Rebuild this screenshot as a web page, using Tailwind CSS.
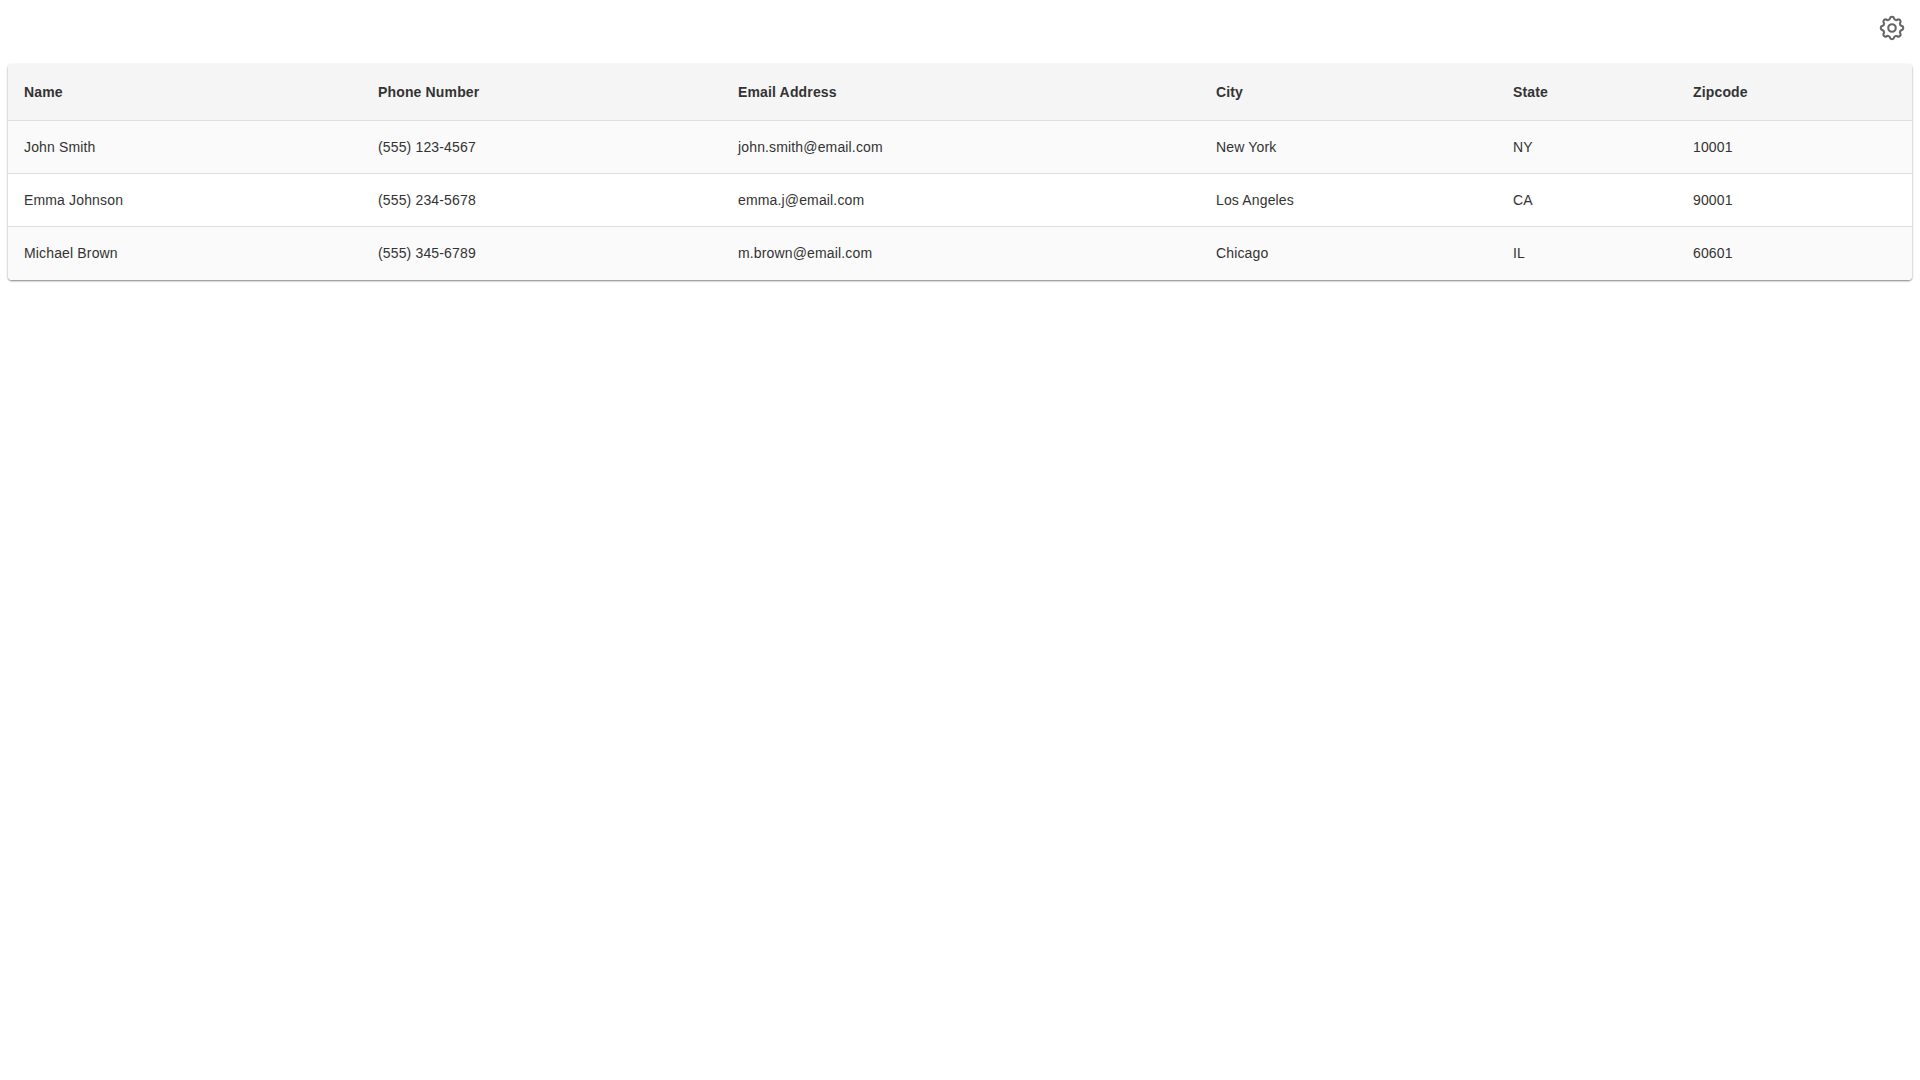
<!DOCTYPE html>
<html lang="en">
<head>
  <meta charset="UTF-8" />
  <title>Contacts</title>
  <script src="https://cdn.jsdelivr.net/npm/@tailwindcss/browser@4"></script>
</head>
<body class="bg-white text-[#333333] font-['Liberation_Sans',Arial,sans-serif] min-h-screen">
  <div class="flex justify-end h-[64px] pt-[13px] pr-[13px]">
    <button class="w-[30px] h-[30px] text-[#666666]">
      <svg xmlns="http://www.w3.org/2000/svg" width="30" height="30" viewBox="0 0 24 24" fill="none" stroke="currentColor" stroke-width="1.7" stroke-linecap="round" stroke-linejoin="round"><path d="M10.325 4.317c.426-1.756 2.924-1.756 3.35 0a1.724 1.724 0 002.573 1.066c1.543-.94 3.31.826 2.37 2.37a1.724 1.724 0 001.065 2.572c1.756.426 1.756 2.924 0 3.35a1.724 1.724 0 00-1.066 2.573c.94 1.543-.826 3.31-2.37 2.37a1.724 1.724 0 00-2.572 1.065c-.426 1.756-2.924 1.756-3.35 0a1.724 1.724 0 00-2.573-1.066c-1.543.94-3.31-.826-2.37-2.37a1.724 1.724 0 00-1.065-2.572c-1.756-.426-1.756-2.924 0-3.35a1.724 1.724 0 001.066-2.573c-.94-1.543.826-3.31 2.37-2.37.996.608 2.296.07 2.572-1.065z"/><path d="M15 12a3 3 0 11-6 0 3 3 0 016 0z"/></svg>
    </button>
  </div>

  <div class="mx-[8px] rounded-[4px] overflow-hidden shadow-[0_1px_2px_rgba(0,0,0,0.5)]">
    <table class="w-full table-fixed border-collapse text-[14px] tracking-[0.15px] text-left">
      <colgroup>
        <col class="w-[354px]" />
        <col class="w-[360px]" />
        <col class="w-[478px]" />
        <col class="w-[297px]" />
        <col class="w-[180px]" />
        <col />
      </colgroup>
      <thead>
        <tr class="bg-[#f5f5f5] h-[56px] border-b border-[#e0e0e0]">
          <th class="pl-[16px] pt-[1px] font-bold">Name</th>
          <th class="pl-[16px] pt-[1px] font-bold">Phone Number</th>
          <th class="pl-[16px] pt-[1px] font-bold">Email Address</th>
          <th class="pl-[16px] pt-[1px] font-bold">City</th>
          <th class="pl-[16px] pt-[1px] font-bold">State</th>
          <th class="pl-[16px] pt-[1px] font-bold">Zipcode</th>
        </tr>
      </thead>
      <tbody>
        <tr class="bg-[#fafafa] h-[53px] border-b border-[#e0e0e0]">
          <td class="pl-[16px] pt-[1px]">John Smith</td>
          <td class="pl-[16px] pt-[1px]">(555) 123-4567</td>
          <td class="pl-[16px] pt-[1px]">john.smith@email.com</td>
          <td class="pl-[16px] pt-[1px]">New York</td>
          <td class="pl-[16px] pt-[1px]">NY</td>
          <td class="pl-[16px] pt-[1px]">10001</td>
        </tr>
        <tr class="bg-white h-[53px] border-b border-[#e0e0e0]">
          <td class="pl-[16px] pt-[1px]">Emma Johnson</td>
          <td class="pl-[16px] pt-[1px]">(555) 234-5678</td>
          <td class="pl-[16px] pt-[1px]">emma.j@email.com</td>
          <td class="pl-[16px] pt-[1px]">Los Angeles</td>
          <td class="pl-[16px] pt-[1px]">CA</td>
          <td class="pl-[16px] pt-[1px]">90001</td>
        </tr>
        <tr class="bg-[#fafafa] h-[54px]">
          <td class="pl-[16px]">Michael Brown</td>
          <td class="pl-[16px]">(555) 345-6789</td>
          <td class="pl-[16px]">m.brown@email.com</td>
          <td class="pl-[16px]">Chicago</td>
          <td class="pl-[16px]">IL</td>
          <td class="pl-[16px]">60601</td>
        </tr>
      </tbody>
    </table>
  </div>
</body>
</html>
